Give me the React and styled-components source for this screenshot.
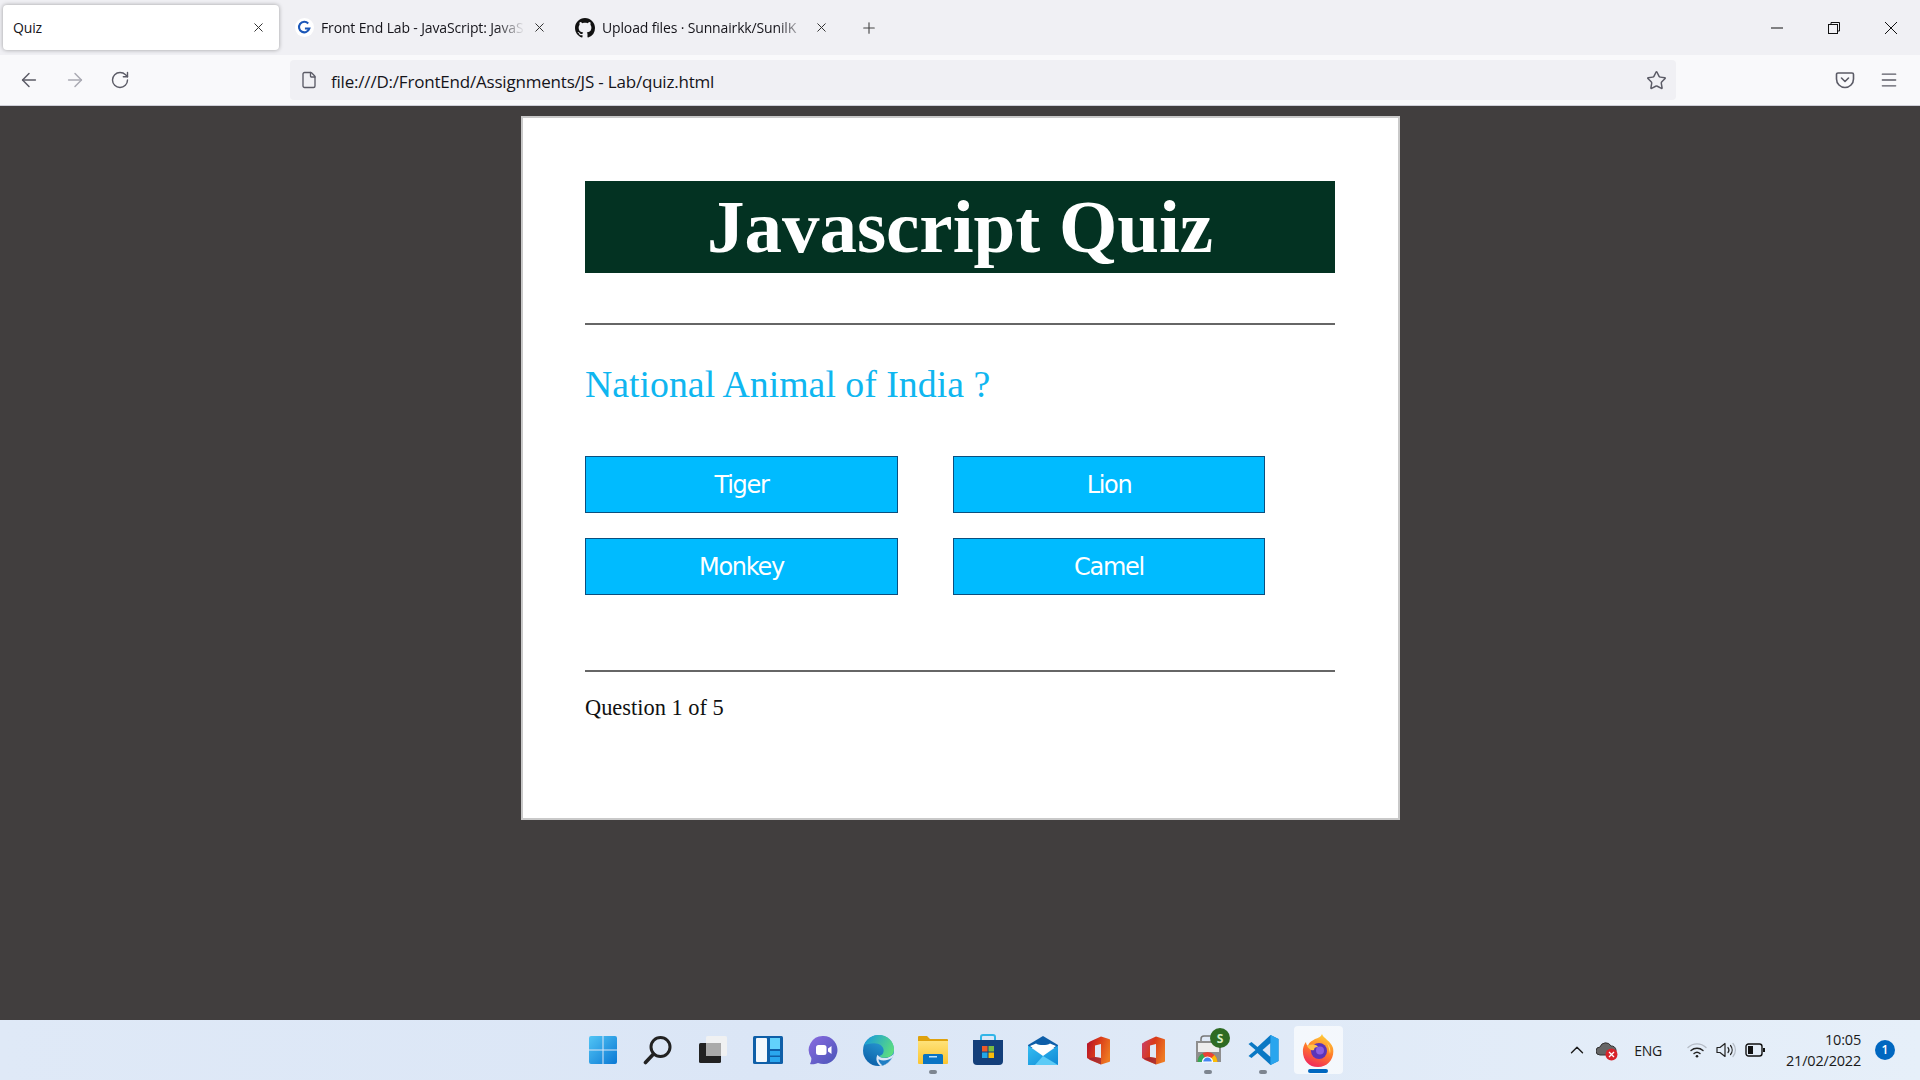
import styled, { createGlobalStyle } from "styled-components"
import { ArrowLeft, ArrowRight, RotateCw, Star, Menu, Plus, X, File, ChevronUp } from "lucide-react"

const Global = createGlobalStyle`
  html, body { margin: 0; padding: 0; }
  * { box-sizing: border-box; }
`

const Screen = styled.div`
  width: 1920px;
  height: 1080px;
  display: flex;
  flex-direction: column;
  overflow: hidden;
  font-family: "Open Sans", "Noto Sans", sans-serif;
  background: #413e3e;
`

/* browser chrome */
const TabStrip = styled.div`
  height: 55px;
  flex: none;
  display: flex;
  align-items: center;
  padding: 0 0 0 3px;
  background: #f0f0f4;
  color: #15141a;
`
const Tab = styled.div`
  width: ${p => p.$w}px;
  height: 45px;
  margin-right: ${p => p.$mr || 0}px;
  flex: none;
  display: flex;
  align-items: center;
  gap: 7px;
  padding: 0 ${p => p.$active ? 13 : 12}px 0 ${p => p.$active ? 10 : 12}px;
  border-radius: 4px;
  background: ${p => p.$active ? "#fff" : "transparent"};
  box-shadow: ${p => p.$active ? "0 0 4px rgba(0,0,0,.35)" : "none"};
`
const TabTitle = styled.span`
  flex: 1;
  font-size: 14px;
  white-space: nowrap;
  overflow: hidden;
  letter-spacing: -0.15px;
  mask-image: ${p => p.$fade ? "linear-gradient(to right, #000 86%, transparent)" : "none"};
`
const TabClose = styled(X)`
  flex: none;
  color: #333;
`
const NewTab = styled(Plus)`
  flex: none;
  margin-left: 19px;
  color: #444;
`
const WindowControls = styled.div`
  margin-left: auto;
  display: flex;
  align-items: center;
  height: 100%;
  padding-right: 22px;
  gap: 43px;
  color: #111;
`

const Toolbar = styled.div`
  height: 51px;
  flex: none;
  display: flex;
  align-items: center;
  padding-left: 18px;
  background: #f9f9fb;
  border-bottom: 1px solid #cfcfd8;
  color: #5b5b66;
`
const NavButtons = styled.div`
  display: flex;
  align-items: center;
  gap: 24px;
  width: 272px;
`
const AddressBar = styled.div`
  width: 1386px;
  height: 40px;
  display: flex;
  align-items: center;
  padding: 0 9px 0 10px;
  background: #f0f0f4;
  border-radius: 4px;
  color: #5b5b66;
`
const Url = styled.span`
  flex: 1;
  margin-left: 13px;
  padding-top: 2px;
  font-size: 17px;
  letter-spacing: -0.2px;
  color: #15141a;
`
const ToolbarRight = styled.div`
  display: flex;
  align-items: center;
  gap: 24px;
  margin-left: 159px;
`

/* page */
const Page = styled.main`
  flex: 1;
  min-height: 0;
  display: flex;
  justify-content: center;
  align-items: flex-start;
  padding: 10px 0 0 1px;
`
const Card = styled.section`
  width: 879px;
  height: 704px;
  padding: 63px 63px 0 62px;
  background: #fff;
  border: 2px solid #c9c9c9;
  font-family: "Liberation Serif", "Times New Roman", serif;
`
const Banner = styled.h1`
  margin: 0;
  height: 92px;
  background: #033222;
  color: #fff;
  font-size: 75px;
  font-weight: 700;
  line-height: 92px;
  text-align: center;
`
const Rule = styled.hr`
  margin: ${p => p.$top}px 0 0;
  height: 2px;
  border: none;
  background: #666;
`
const Question = styled.h2`
  margin: 29px 0 0;
  height: 60px;
  font-size: 37.8px;
  font-weight: 400;
  line-height: 60px;
  color: #0fb6f0;
`
const Options = styled.div`
  margin-top: 42px;
  display: grid;
  grid-template-columns: 313px 312px;
  grid-auto-rows: 57px;
  column-gap: 55px;
  row-gap: 25px;
`
const Option = styled.button`
  padding: 0;
  border: 1px solid #0b4f7f;
  background: #00bbff;
  color: #fff;
  font-family: "DejaVu Sans", Verdana, sans-serif;
  font-size: 24px;
  letter-spacing: -1.3px;
  cursor: pointer;
`
const Progress = styled.p`
  margin: 19px 0 0;
  font-size: 22.4px;
  line-height: 34px;
  color: #111;
`

/* taskbar */
const Taskbar = styled.footer`
  height: 60px;
  flex: none;
  display: grid;
  grid-template-columns: 1fr auto 1fr;
  align-items: center;
  background: linear-gradient(90deg, #dfe9f7 0%, #dbe6f6 40%, #e6eff9 100%);
`
const Apps = styled.div`
  grid-column: 2;
  display: flex;
  margin-left: 1px;
`
const AppSlot = styled.div`
  position: relative;
  width: 55px;
  height: 60px;
  display: flex;
  align-items: center;
  justify-content: center;
  &::before {
    content: "";
    display: ${p => p.$active ? "block" : "none"};
    position: absolute;
    left: 3px;
    right: 3px;
    top: 6px;
    bottom: 6px;
    border-radius: 4px;
    background: rgba(255,255,255,.65);
  }
  & > svg { position: relative; }
`
const Dot = styled.i`
  position: absolute;
  bottom: ${p => p.$active ? 7 : 6}px;
  left: 50%;
  width: ${p => p.$active ? 20 : 8}px;
  height: 4px;
  margin-left: ${p => p.$active ? -10 : -4}px;
  border-radius: 2px;
  background: ${p => p.$active ? "#0067c0" : "#7d8590"};
`
const Tray = styled.div`
  grid-column: 3;
  justify-self: end;
  display: flex;
  align-items: center;
  color: #1a1a1a;
`
const TrayGroup = styled.div`
  display: flex;
  align-items: center;
  gap: ${p => p.$gap}px;
  margin-right: ${p => p.$mr}px;
`
const Lang = styled.span`
  font-size: 14px;
  letter-spacing: -0.2px;
  margin-right: 25px;
`
const Clock = styled.div`
  font-size: 14.5px;
  line-height: 21px;
  letter-spacing: -0.2px;
  text-align: right;
`
const Badge = styled.span`
  width: 20px;
  height: 20px;
  margin: 0 25px 0 14px;
  border-radius: 50%;
  background: #0067c0;
  color: #fff;
  font-size: 12px;
  font-weight: 600;
  line-height: 20px;
  text-align: center;
`

const GoogleIcon = () => (
  <svg width="19" height="19" viewBox="0 0 18 18">
    <circle cx="9" cy="9" r="9" fill="#fff" />
    <path d="M12.5 5.2A5 5 0 1 0 13.6 10H9.4" fill="none" stroke="#1a56b8" strokeWidth="2" />
  </svg>
)
const GithubIcon = () => (
  <svg width="20" height="20" viewBox="0 0 16 16" fill="#111">
    <path d="M8 0C3.58 0 0 3.58 0 8c0 3.54 2.29 6.53 5.47 7.59.4.07.55-.17.55-.38 0-.19-.01-.82-.01-1.49-2.01.37-2.53-.49-2.69-.94-.09-.23-.48-.94-.82-1.13-.28-.15-.68-.52-.01-.53.63-.01 1.08.58 1.23.82.72 1.21 1.87.87 2.33.66.07-.52.28-.87.51-1.07-1.78-.2-3.64-.89-3.64-3.95 0-.87.31-1.59.82-2.15-.08-.2-.36-1.02.08-2.12 0 0 .67-.21 2.2.82.64-.18 1.32-.27 2-.27s1.36.09 2 .27c1.53-1.04 2.2-.82 2.2-.82.44 1.1.16 1.92.08 2.12.51.56.82 1.27.82 2.15 0 3.07-1.87 3.75-3.65 3.95.29.25.54.73.54 1.48 0 1.07-.01 1.93-.01 2.2 0 .21.15.46.55.38A8.01 8.01 0 0 0 16 8c0-4.42-3.58-8-8-8z" />
  </svg>
)
const MinIcon = () => (
  <svg width="14" height="14" viewBox="0 0 14 14"><path d="M1 7h12" stroke="currentColor" strokeWidth="1" /></svg>
)
const RestoreIcon = () => (
  <svg width="14" height="14" viewBox="0 0 14 14" fill="none" stroke="currentColor">
    <rect x="1.5" y="3.5" width="9" height="9" />
    <path d="M4 3.5V1.5h8.5V10h-2" />
  </svg>
)
const CloseIcon = () => (
  <svg width="14" height="14" viewBox="0 0 14 14"><path d="M1 1l12 12M13 1L1 13" stroke="currentColor" strokeWidth="1" /></svg>
)
const PocketIcon = () => (
  <svg width="20" height="20" viewBox="0 0 20 20" fill="none" stroke="currentColor" strokeWidth="1.6">
    <path d="M3 3h14a1.5 1.5 0 0 1 1.5 1.5V9a8.5 8.5 0 0 1-17 0V4.5A1.5 1.5 0 0 1 3 3z" />
    <path d="M6.5 8l3.5 3.5L13.5 8" strokeLinecap="round" strokeLinejoin="round" />
  </svg>
)

const WindowsIcon = () => (
  <svg width="30" height="30" viewBox="0 0 30 30">
    <defs>
      <linearGradient id="win" x1="0" y1="0" x2="1" y2="1">
        <stop offset="0" stopColor="#52c5f5" />
        <stop offset="1" stopColor="#0a78d4" />
      </linearGradient>
    </defs>
    <path d="M1 3a2 2 0 0 1 2-2h11.500v13.500H1zM15.500 1H27a2 2 0 0 1 2 2v11.500H15.500zM1 15.500h13.500V29H3a2 2 0 0 1-2-2zM15.500 15.500H29V27a2 2 0 0 1-2 2H15.500z" fill="url(#win)" />
  </svg>
)
const SearchIcon = () => (
  <svg width="30" height="30" viewBox="0 0 30 30" fill="none" stroke="#222">
    <circle cx="17.500" cy="12" r="9.500" strokeWidth="3" />
    <path d="M10.500 19l-8 8.500" strokeWidth="3.600" strokeLinecap="round" />
  </svg>
)
const TaskViewIcon = () => (
  <svg width="30" height="30" viewBox="0 0 30 30">
    <rect x="1" y="8" width="22" height="20" rx="1.5" fill="#222" />
    <rect x="8" y="1" width="21" height="20" rx="1.5" fill="#f2f2f2" fillOpacity=".9" />
    <rect x="8" y="8" width="15" height="13" fill="#aaa" />
  </svg>
)
const WidgetsIcon = () => (
  <svg width="30" height="30" viewBox="0 0 30 30">
    <rect x="0" y="1" width="30" height="28" rx="1.5" fill="#0f5fa8" />
    <rect x="3" y="3" width="11" height="24" rx="1" fill="#f4f8fc" />
    <rect x="17" y="3" width="10" height="11" fill="#62d2fb" />
    <rect x="17" y="16" width="10" height="4.5" fill="#2aa7ee" />
    <rect x="17" y="22" width="10" height="5" fill="#2aa7ee" />
  </svg>
)
const ChatIcon = () => (
  <svg width="30" height="30" viewBox="0 0 30 30">
    <defs>
      <linearGradient id="chat" x1="0" y1="0" x2="1" y2="1">
        <stop offset="0" stopColor="#8a6be0" />
        <stop offset="1" stopColor="#4a55b8" />
      </linearGradient>
    </defs>
    <path d="M15.500 1a14 14 0 1 1-5.500 26.900C7.500 29 4 29.500 2 29c1-2 1.600-4 1.300-6A14 14 0 0 1 15.500 1z" fill="url(#chat)" />
    <rect x="8" y="10" width="10.500" height="10" rx="2.500" fill="#fff" />
    <path d="M20 13.500l3.500-2.500v8L20 16.500z" fill="#fff" />
  </svg>
)
const EdgeIcon = () => (
  <svg width="31" height="31" viewBox="0 0 30 30">
    <defs>
      <linearGradient id="edgeA" x1="0.7" y1="0" x2="0.2" y2="1">
        <stop offset="0" stopColor="#2fa6dc" />
        <stop offset="1" stopColor="#0a5ea8" />
      </linearGradient>
      <linearGradient id="edgeB" x1="0" y1="0.3" x2="1" y2="0.7">
        <stop offset="0" stopColor="#1a9cd8" />
        <stop offset="1" stopColor="#5fe07c" />
      </linearGradient>
    </defs>
    <circle cx="15" cy="15" r="15" fill="url(#edgeA)" />
    <path d="M30 18c-1.500 6-6 11-13 12-4-3-5-7-3-11 3 4 11 5 16-1z" fill="#dbe6f6" />
    <path d="M28 22c-2 3.500-5 6-9 7.500-2-1-4-4-4-6 4 2 9 1.500 13-1.500z" fill="#1f7ec4" />
    <path d="M1 10C4 3 10 0 15 0c9 0 15 6 15 14 0 5-4 8-9 8-3 0-5-1-5-2 2 0 4-2 4-5 0-4-4-7-9-7-4 0-8 1-10 2z" fill="url(#edgeB)" />
  </svg>
)
const FolderIcon = () => (
  <svg width="30" height="28" viewBox="0 0 30 28">
    <defs>
      <linearGradient id="folder" x1="0" y1="0" x2="0" y2="1">
        <stop offset="0" stopColor="#fee27a" />
        <stop offset="1" stopColor="#fcc530" />
      </linearGradient>
    </defs>
    <path d="M0 1a1 1 0 0 1 1-1h8l3 3h17a1 1 0 0 1 1 1v3H0z" fill="#dfa20e" />
    <path d="M0 5h30v22a1 1 0 0 1-1 1H1a1 1 0 0 1-1-1z" fill="url(#folder)" />
    <path d="M5 19.500A1.500 1.500 0 0 1 6.500 18h17a1.500 1.500 0 0 1 1.500 1.500V28H5z" fill="#0a74c4" />
    <rect x="11" y="20" width="8" height="1.500" fill="#bfe4fb" />
  </svg>
)
const StoreIcon = () => (
  <svg width="30" height="32" viewBox="0 0 30 32">
    <path d="M8 7V3a2 2 0 0 1 2-2h10a2 2 0 0 1 2 2v4" fill="none" stroke="#32b5e8" strokeWidth="2" />
    <path d="M0 6h30v21a4 4 0 0 1-4 4H4a4 4 0 0 1-4-4z" fill="#143f7a" />
    <rect x="9" y="12" width="5.500" height="5.500" fill="#f05a28" />
    <rect x="15.500" y="12" width="5.500" height="5.500" fill="#7cbb42" />
    <rect x="9" y="18.500" width="5.500" height="5.500" fill="#22a7e8" />
    <rect x="15.500" y="18.500" width="5.500" height="5.500" fill="#fbbc09" />
  </svg>
)
const MailIcon = () => (
  <svg width="30" height="29" viewBox="0 0 30 29">
    <defs>
      <linearGradient id="mail" x1="0" y1="0" x2="1" y2="1">
        <stop offset="0" stopColor="#34bdf2" />
        <stop offset="1" stopColor="#0f8ad6" />
      </linearGradient>
    </defs>
    <path d="M0 9L15 0l15 9v3H0z" fill="#0e5ea8" />
    <path d="M2 10L8 7.500c3 2 11 2 14 0L28 10 15 20z" fill="#fff" />
    <path d="M0 9.500l15 10.500L30 9.500V29H0z" fill="url(#mail)" />
    <path d="M15 20l15 9V29H7z" fill="#5ccbf7" />
  </svg>
)
const OfficeIcon = ({ id, tint }) => (
  <svg width="23" height="29" viewBox="0 0 23 29">
    <defs>
      <linearGradient id={id} x1="0" y1="0.2" x2="1" y2="0.6">
        <stop offset="0" stopColor={tint} />
        <stop offset=".45" stopColor="#d93a1a" />
        <stop offset="1" stopColor="#ee7a22" />
      </linearGradient>
    </defs>
    <path fillRule="evenodd" d="M1 7l2-1.500L14 .500l8 2.500a1 1 0 0 1 1 1v21a1 1 0 0 1-1 1l-8 2.500L3 24l-2-1.500a1 1 0 0 1-1-1V8a1 1 0 0 1 1-1zM8 9.500V21l6 1V8z" fill={`url(#${id})`} />
    <path d="M1 22.500L8 21l6 1v6.500z" fill="#8e1a3a" fillOpacity=".6" />
  </svg>
)
const ChromeStoreIcon = () => (
  <svg width="44" height="44" viewBox="0 0 44 44">
    <path d="M15 14v-3a3 3 0 0 1 3-3h8" fill="none" stroke="#777" strokeWidth="1.500" />
    <rect x="10" y="13" width="25" height="21" fill="#8e8e8e" />
    <rect x="12" y="15" width="21" height="9" fill="#ededed" />
    <path d="M11.500 34a10 10 0 0 1 20 0z" fill="#e94235" />
    <path d="M11.500 34a10 10 0 0 1 5-8.600l5 8.600z" fill="#34a853" />
    <path d="M31.500 34a10 10 0 0 0-3-7l-7 7z" fill="#fbbc05" />
    <path d="M16.500 34a5 5 0 0 1 10 0z" fill="#4285f4" stroke="#fff" strokeWidth="1.200" />
    <circle cx="34" cy="10" r="10" fill="#2e6b23" />
    <text x="34" y="14.500" fontSize="12" fontWeight="700" textAnchor="middle" fill="#d8f0c8" fontFamily="Open Sans, sans-serif">S</text>
  </svg>
)
const VsCodeIcon = () => (
  <svg width="31" height="30" viewBox="0 0 30 30">
    <path d="M22 0l8 4v22l-8 4-13-12-6 5-3-2 7-6-7-6 3-2 6 5z" fill="#0a78c4" />
    <path d="M22 8v14l-8-7z" fill="#dbe6f6" />
    <path d="M22 0l8 4v22l-8 4z" fill="#2aa5ee" />
  </svg>
)
const FirefoxIcon = () => (
  <svg width="32" height="33" viewBox="0 0 32 33">
    <defs>
      <linearGradient id="fx" x1="0.7" y1="0" x2="0.3" y2="1">
        <stop offset="0" stopColor="#ffd23a" />
        <stop offset=".5" stopColor="#ff7a2a" />
        <stop offset="1" stopColor="#f0245e" />
      </linearGradient>
    </defs>
    <path d="M20 0c1 4 9 7 11 14 2 10-5 19-15 19S0 25 1 15c.500-3 2-6 3-7 0 2 1 3 2 4 1-4 4-5 7-7 3-1 6-2 7-5z" fill="url(#fx)" />
    <circle cx="17" cy="17" r="8" fill="#5b34b8" />
    <circle cx="18" cy="16.500" r="4" fill="#8a5ce0" />
    <path d="M5 12c4-2 9-2 11 1-3 0-4 1-4 3-3 1-5-1-7-4z" fill="#ffc24a" />
    <path d="M25 9c3 3 4 7 3 11-1-4-1-8-3-11z" fill="#ffe26a" />
  </svg>
)
const CloudAlertIcon = () => (
  <svg width="22" height="22" viewBox="0 0 22 22">
    <path d="M4 16a4 4 0 0 1 0-8 6 6 0 0 1 11-1 4.500 4.500 0 0 1 1 9z" fill="#666" stroke="#333" strokeWidth="1" />
    <circle cx="15.500" cy="15.500" r="6" fill="#d8232a" />
    <path d="M13 13l5 5M18 13l-5 5" stroke="#fff" strokeWidth="1.300" />
  </svg>
)
const WifiIcon = () => (
  <svg width="20" height="16" viewBox="0 0 20 16" fill="none" strokeLinecap="round">
    <path d="M1 5.500a13 13 0 0 1 18 0" stroke="#b5bcc6" strokeWidth="1.400" />
    <path d="M4 8.500a9 9 0 0 1 12 0" stroke="#222" strokeWidth="1.400" />
    <path d="M7 11.500a4.500 4.500 0 0 1 6 0" stroke="#222" strokeWidth="1.400" />
    <circle cx="10" cy="14.300" r="1.300" fill="#222" />
  </svg>
)
const SpeakerIcon = () => (
  <svg width="20" height="18" viewBox="0 0 20 18" fill="none" strokeLinecap="round">
    <path d="M1 6.500h3L9 2.500v13l-5-4H1z" stroke="#222" strokeWidth="1.200" strokeLinejoin="round" />
    <path d="M12 6.500a4 4 0 0 1 0 5M14.500 4.500a7 7 0 0 1 0 9" stroke="#222" strokeWidth="1.200" />
    <path d="M17 2.500a10 10 0 0 1 0 13" stroke="#b5bcc6" strokeWidth="1.200" />
  </svg>
)
const BatteryIcon = () => (
  <svg width="20" height="14" viewBox="0 0 20 14">
    <rect x="1" y="1" width="16" height="12" rx="2.500" fill="none" stroke="#111" strokeWidth="1.400" />
    <rect x="3" y="3" width="5" height="8" fill="#111" />
    <rect x="18" y="5" width="2" height="4" fill="#111" />
  </svg>
)

const taskbarApps = [
  { key: "start", icon: <WindowsIcon /> },
  { key: "search", icon: <SearchIcon /> },
  { key: "taskview", icon: <TaskViewIcon /> },
  { key: "widgets", icon: <WidgetsIcon /> },
  { key: "chat", icon: <ChatIcon /> },
  { key: "edge", icon: <EdgeIcon /> },
  { key: "files", icon: <FolderIcon />, open: true },
  { key: "store", icon: <StoreIcon /> },
  { key: "mail", icon: <MailIcon /> },
  { key: "office1", icon: <OfficeIcon id="of1" tint="#b3122a" /> },
  { key: "office2", icon: <OfficeIcon id="of2" tint="#c9406a" /> },
  { key: "chromestore", icon: <ChromeStoreIcon />, open: true },
  { key: "vscode", icon: <VsCodeIcon />, open: true },
  { key: "firefox", icon: <FirefoxIcon />, active: true },
]

const answers = ["Tiger", "Lion", "Monkey", "Camel"]

const App = () => {
  return (
    <Screen>
      <Global />
      <TabStrip>
        <Tab $active $w={276} $mr={4}>
          <TabTitle>Quiz</TabTitle>
          <TabClose size={15} strokeWidth={1.6} />
        </Tab>
        <Tab $w={276} $mr={4}>
          <GoogleIcon />
          <TabTitle $fade>Front End Lab - JavaScript: JavaS</TabTitle>
          <TabClose size={15} strokeWidth={1.6} />
        </Tab>
        <Tab $w={278}>
          <GithubIcon />
          <TabTitle $fade>Upload files · Sunnairkk/SunilK</TabTitle>
          <TabClose size={15} strokeWidth={1.6} />
        </Tab>
        <NewTab size={18} strokeWidth={1.5} />
        <WindowControls>
          <MinIcon />
          <RestoreIcon />
          <CloseIcon />
        </WindowControls>
      </TabStrip>
      <Toolbar>
        <NavButtons>
          <ArrowLeft size={22} strokeWidth={1.6} />
          <ArrowRight size={22} strokeWidth={1.6} color="#a9a9b2" />
          <RotateCw size={20} strokeWidth={1.7} />
        </NavButtons>
        <AddressBar>
          <File size={18} strokeWidth={1.8} />
          <Url>file:///D:/FrontEnd/Assignments/JS - Lab/quiz.html</Url>
          <Star size={21} strokeWidth={1.7} />
        </AddressBar>
        <ToolbarRight>
          <PocketIcon />
          <Menu size={20} strokeWidth={1.6} />
        </ToolbarRight>
      </Toolbar>
      <Page>
        <Card>
          <Banner>Javascript Quiz</Banner>
          <Rule $top={50} />
          <Question>National Animal of India ?</Question>
          <Options>
            {answers.map(a => <Option key={a}>{a}</Option>)}
          </Options>
          <Rule $top={75} />
          <Progress>Question 1 of 5</Progress>
        </Card>
      </Page>
      <Taskbar>
        <Apps>
          {taskbarApps.map(app => (
            <AppSlot key={app.key} $active={app.active}>
              {app.icon}
              {(app.open || app.active) && <Dot $active={app.active} />}
            </AppSlot>
          ))}
        </Apps>
        <Tray>
          <TrayGroup $gap={8} $mr={16}>
            <ChevronUp size={22} strokeWidth={1.5} />
            <CloudAlertIcon />
          </TrayGroup>
          <Lang>ENG</Lang>
          <TrayGroup $gap={9} $mr={21}>
            <WifiIcon />
            <SpeakerIcon />
            <BatteryIcon />
          </TrayGroup>
          <Clock>10:05<br />21/02/2022</Clock>
          <Badge>1</Badge>
        </Tray>
      </Taskbar>
    </Screen>
  )
}

export default App
